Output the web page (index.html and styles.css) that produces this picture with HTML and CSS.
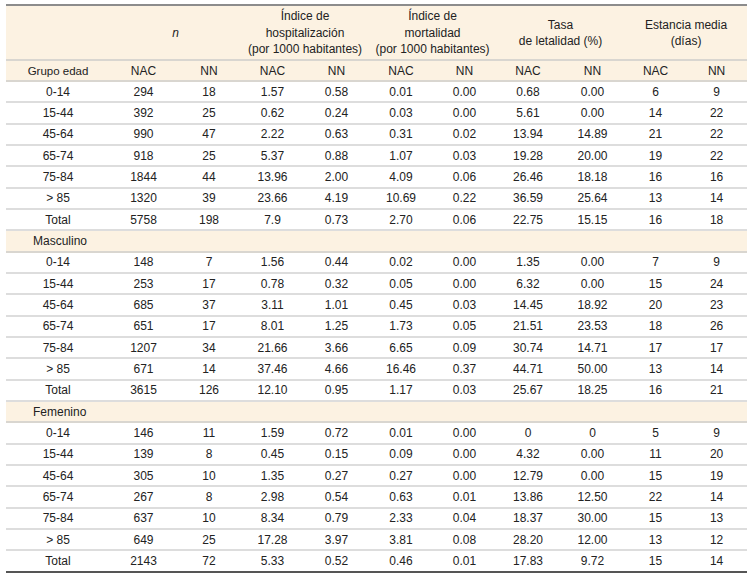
FILE: index.html
```html
<!DOCTYPE html>
<html lang="es">
<head>
<meta charset="utf-8">
<title>Tabla NAC / NN</title>
<link rel="stylesheet" href="styles.css">
</head>
<body>
<div class="wrap">
<table class="data">
  <colgroup>
    <col class="c-label"><col class="c67"><col class="c64"><col class="c63"><col class="c65"><col class="c64"><col class="c63"><col class="c64"><col class="c65"><col class="c61"><col class="c61">
  </colgroup>
  <thead>
    <tr class="head">
      <th></th>
      <th colspan="2"><em>n</em></th>
      <th colspan="2">Índice de<br>hospitalización<br>(por 1000 habitantes)</th>
      <th colspan="2">Índice de<br>mortalidad<br>(por 1000 habitantes)</th>
      <th colspan="2">Tasa<br>de letalidad (%)</th>
      <th colspan="2">Estancia media<br>(días)</th>
    </tr>
    <tr class="sub">
      <th class="grp">Grupo edad</th>
      <th>NAC</th><th>NN</th><th>NAC</th><th>NN</th><th>NAC</th><th>NN</th><th>NAC</th><th>NN</th><th>NAC</th><th>NN</th>
    </tr>
  </thead>
  <tbody>
    <tr><td>0-14</td><td>294</td><td>18</td><td>1.57</td><td>0.58</td><td>0.01</td><td>0.00</td><td>0.68</td><td>0.00</td><td>6</td><td>9</td></tr>
    <tr><td>15-44</td><td>392</td><td>25</td><td>0.62</td><td>0.24</td><td>0.03</td><td>0.00</td><td>5.61</td><td>0.00</td><td>14</td><td>22</td></tr>
    <tr><td>45-64</td><td>990</td><td>47</td><td>2.22</td><td>0.63</td><td>0.31</td><td>0.02</td><td>13.94</td><td>14.89</td><td>21</td><td>22</td></tr>
    <tr><td>65-74</td><td>918</td><td>25</td><td>5.37</td><td>0.88</td><td>1.07</td><td>0.03</td><td>19.28</td><td>20.00</td><td>19</td><td>22</td></tr>
    <tr><td>75-84</td><td>1844</td><td>44</td><td>13.96</td><td>2.00</td><td>4.09</td><td>0.06</td><td>26.46</td><td>18.18</td><td>16</td><td>16</td></tr>
    <tr><td>&gt; 85</td><td>1320</td><td>39</td><td>23.66</td><td>4.19</td><td>10.69</td><td>0.22</td><td>36.59</td><td>25.64</td><td>13</td><td>14</td></tr>
    <tr><td>Total</td><td>5758</td><td>198</td><td>7.9</td><td>0.73</td><td>2.70</td><td>0.06</td><td>22.75</td><td>15.15</td><td>16</td><td>18</td></tr>
    <tr class="section"><td colspan="11">Masculino</td></tr>
    <tr><td>0-14</td><td>148</td><td>7</td><td>1.56</td><td>0.44</td><td>0.02</td><td>0.00</td><td>1.35</td><td>0.00</td><td>7</td><td>9</td></tr>
    <tr><td>15-44</td><td>253</td><td>17</td><td>0.78</td><td>0.32</td><td>0.05</td><td>0.00</td><td>6.32</td><td>0.00</td><td>15</td><td>24</td></tr>
    <tr><td>45-64</td><td>685</td><td>37</td><td>3.11</td><td>1.01</td><td>0.45</td><td>0.03</td><td>14.45</td><td>18.92</td><td>20</td><td>23</td></tr>
    <tr><td>65-74</td><td>651</td><td>17</td><td>8.01</td><td>1.25</td><td>1.73</td><td>0.05</td><td>21.51</td><td>23.53</td><td>18</td><td>26</td></tr>
    <tr><td>75-84</td><td>1207</td><td>34</td><td>21.66</td><td>3.66</td><td>6.65</td><td>0.09</td><td>30.74</td><td>14.71</td><td>17</td><td>17</td></tr>
    <tr><td>&gt; 85</td><td>671</td><td>14</td><td>37.46</td><td>4.66</td><td>16.46</td><td>0.37</td><td>44.71</td><td>50.00</td><td>13</td><td>14</td></tr>
    <tr><td>Total</td><td>3615</td><td>126</td><td>12.10</td><td>0.95</td><td>1.17</td><td>0.03</td><td>25.67</td><td>18.25</td><td>16</td><td>21</td></tr>
    <tr class="section"><td colspan="11">Femenino</td></tr>
    <tr><td>0-14</td><td>146</td><td>11</td><td>1.59</td><td>0.72</td><td>0.01</td><td>0.00</td><td>0</td><td>0</td><td>5</td><td>9</td></tr>
    <tr><td>15-44</td><td>139</td><td>8</td><td>0.45</td><td>0.15</td><td>0.09</td><td>0.00</td><td>4.32</td><td>0.00</td><td>11</td><td>20</td></tr>
    <tr><td>45-64</td><td>305</td><td>10</td><td>1.35</td><td>0.27</td><td>0.27</td><td>0.00</td><td>12.79</td><td>0.00</td><td>15</td><td>19</td></tr>
    <tr><td>65-74</td><td>267</td><td>8</td><td>2.98</td><td>0.54</td><td>0.63</td><td>0.01</td><td>13.86</td><td>12.50</td><td>22</td><td>14</td></tr>
    <tr><td>75-84</td><td>637</td><td>10</td><td>8.34</td><td>0.79</td><td>2.33</td><td>0.04</td><td>18.37</td><td>30.00</td><td>15</td><td>13</td></tr>
    <tr><td>&gt; 85</td><td>649</td><td>25</td><td>17.28</td><td>3.97</td><td>3.81</td><td>0.08</td><td>28.20</td><td>12.00</td><td>13</td><td>12</td></tr>
    <tr class="last"><td>Total</td><td>2143</td><td>72</td><td>5.33</td><td>0.52</td><td>0.46</td><td>0.01</td><td>17.83</td><td>9.72</td><td>15</td><td>14</td></tr>
  </tbody>
</table>
</div>
</body>
</html>
```
FILE: styles.css
```css
html, body {
  margin: 0;
  padding: 0;
  background: #ffffff;
}
body {
  font-family: "Liberation Sans", Arial, sans-serif;
  font-size: 12px;
  color: #222222;
  overflow: hidden;
}
.wrap {
  padding: 4px 8px 0 6px;
}
.data {
  border-collapse: collapse;
  table-layout: fixed;
  width: 741px;
}
.c-label { width: 104px; }
.c67 { width: 67px; }
.c65 { width: 65px; }
.c64 { width: 64px; }
.c63 { width: 63px; }
.c61 { width: 61px; }
.data th,
.data td {
  padding: 0;
  text-align: center;
  font-weight: normal;
  white-space: nowrap;
}
.head th {
  background: #fcf2e2;
  border-top: 2px solid #8c8c8c;
  height: 52px;
  line-height: 16.5px;
  vertical-align: middle;
  padding-top: 1px;
}
.sub th {
  background: #fcf2e2;
  border-top: 2px solid #d9d6d0;
  border-bottom: 2px solid #d9d6d0;
  height: 19px;
}
.sub th.grp {
  font-size: 11.5px;
}
.data tbody td {
  height: 19.33px;
  border-bottom: 2px solid #dddddd;
}
.data tbody tr.section td {
  background: #fcf2e2;
  text-align: left;
  padding-left: 27px;
  border-bottom-color: #d9d6d0;
}
.data tbody tr.last td {
  border-bottom: 2px solid #555555;
}
```
